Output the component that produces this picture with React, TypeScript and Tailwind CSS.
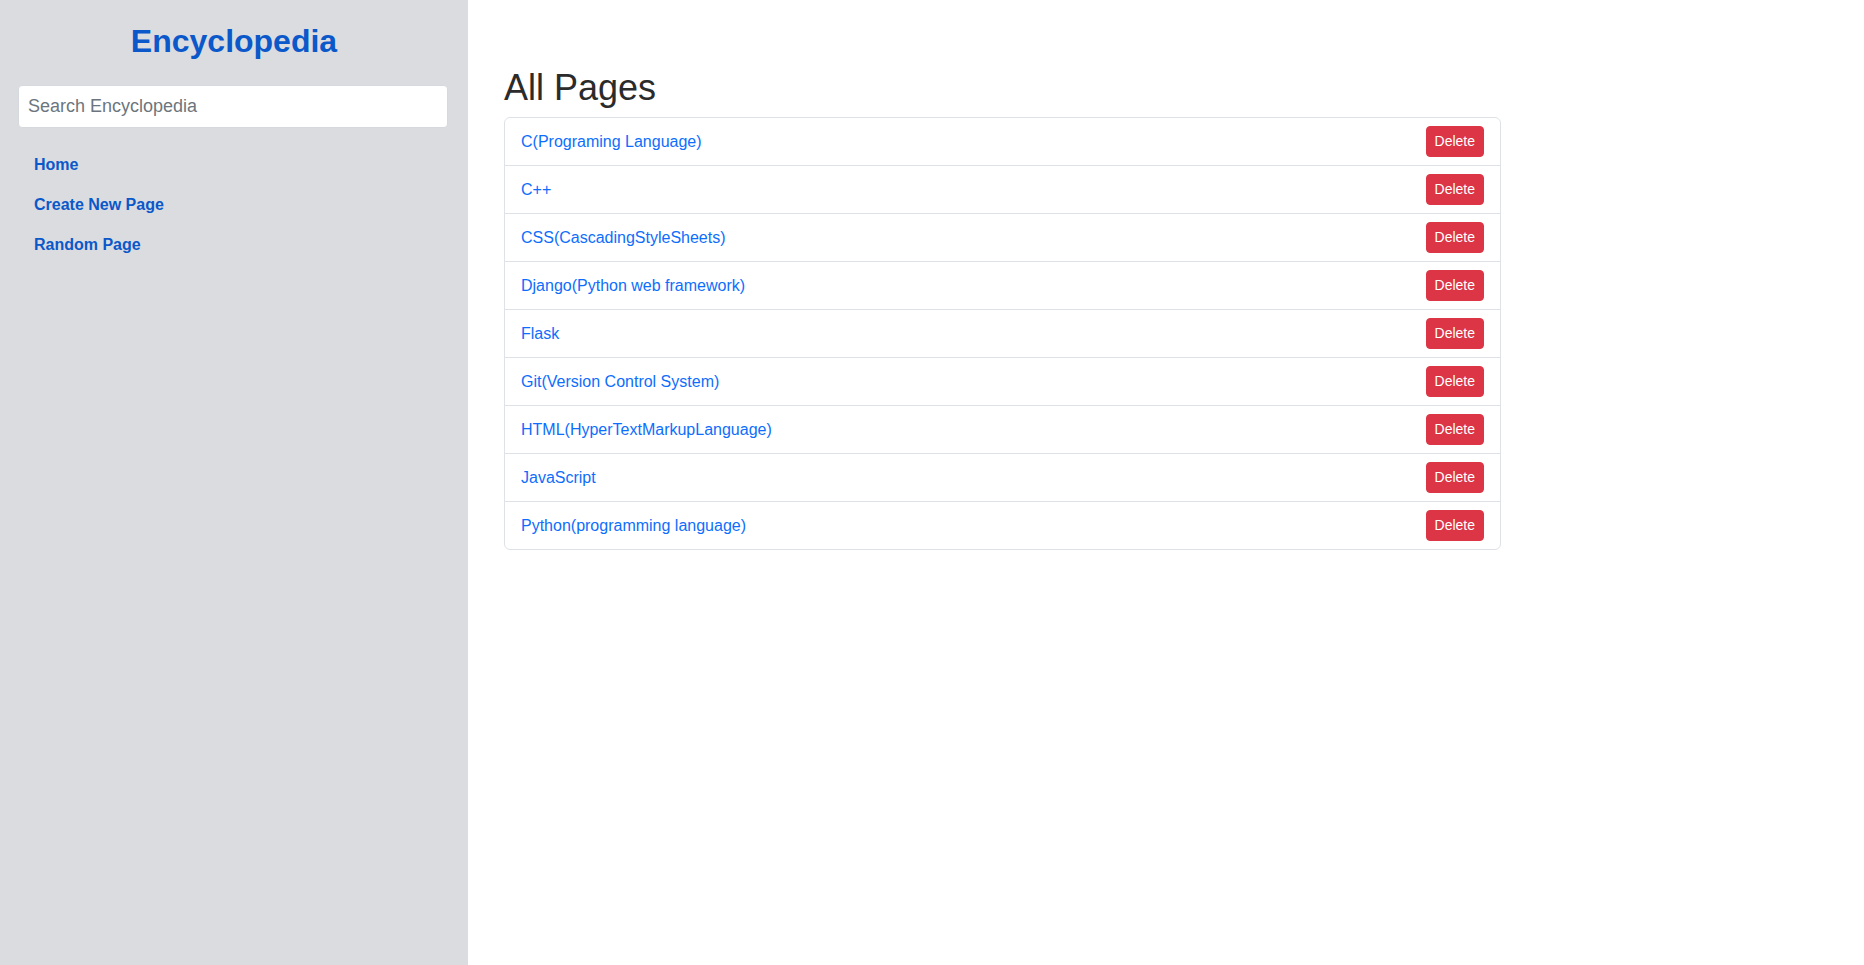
import React from "react";

const pages = [
  "C(Programing Language)",
  "C++",
  "CSS(CascadingStyleSheets)",
  "Django(Python web framework)",
  "Flask",
  "Git(Version Control System)",
  "HTML(HyperTextMarkupLanguage)",
  "JavaScript",
  "Python(programming language)",
];

export default function App() {
  return (
    <div className="flex min-h-[965px] w-full bg-white font-['Liberation_Sans',Arial,sans-serif]">
      <aside className="w-[468px] shrink-0 bg-[#dbdce0]">
        <h1 className="mt-[22px] text-center text-[32px] font-bold leading-[38px] text-[#0a58ca]">
          Encyclopedia
        </h1>
        <div className="ml-[18px] mt-[25px] w-[430px]">
          <input
            type="text"
            placeholder="Search Encyclopedia"
            className="h-[43px] w-full rounded-[4px] border border-[#d5d8dc] bg-white px-[9px] text-[18px] text-[#212529] placeholder:text-[#6c757d] outline-none"
          />
        </div>
        <nav className="ml-[34px] mt-[25px] flex flex-col gap-[16px]">
          <a href="#" className="text-[16px] font-bold leading-[24px] text-[#0a58ca]">Home</a>
          <a href="#" className="text-[16px] font-bold leading-[24px] text-[#0a58ca]">Create New Page</a>
          <a href="#" className="text-[16px] font-bold leading-[24px] text-[#0a58ca]">Random Page</a>
        </nav>
      </aside>
      <main className="flex-1 pl-[36px] pt-[66px]">
        <h2 className="mb-[8px] text-[36px] font-normal leading-[43px] text-[#2b2b2b]">All Pages</h2>
        <ul className="w-[997px] rounded-[6px] border border-[#dee2e6]">
          {pages.map((p, i) => (
            <li
              key={p}
              className={
                i === 0
                  ? "flex items-center justify-between px-[16px] py-[8px]"
                  : "flex items-center justify-between border-t border-[#dee2e6] px-[16px] py-[8px]"
              }
            >
              <a href="#" className="text-[16px] leading-[24px] text-[#0d6efd]">{p}</a>
              <button className="rounded-[4px] border border-[#dc3545] bg-[#dc3545] px-[8px] py-[4px] text-[14px] leading-[21px] text-white">
                Delete
              </button>
            </li>
          ))}
        </ul>
      </main>
    </div>
  );
}
